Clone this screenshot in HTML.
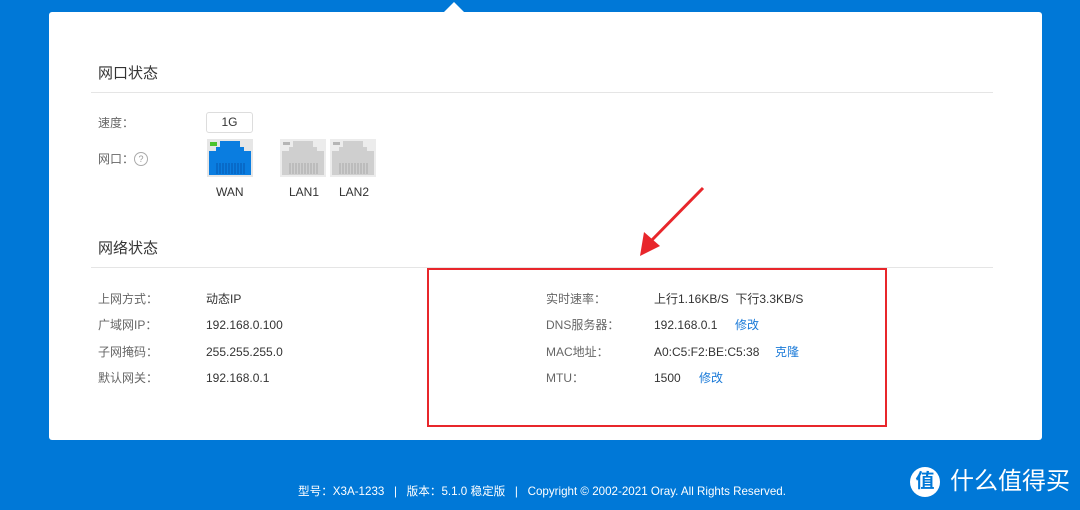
<!DOCTYPE html>
<html><head><meta charset="utf-8"><style>
body{margin:0;width:1080px;height:510px;background:#0078d7;position:relative;overflow:hidden;font-family:"Liberation Sans","Noto Sans CJK SC",sans-serif;}
.card{position:absolute;left:49px;top:12px;width:993px;height:428px;background:#fff;border-radius:3px;}
.t{position:absolute;font-size:12px;line-height:14px;color:#333;white-space:nowrap;}
.l{color:#666;}
.h{position:absolute;font-size:15px;line-height:18px;color:#333;}
.hr{position:absolute;height:1px;background:#e5e5e5;}
.a{color:#1a7ad8;}
.f{position:absolute;top:485px;font-size:11.6px;line-height:14px;color:#fff;white-space:nowrap;}
</style></head><body>
<svg style="position:absolute;left:443px;top:2px" width="22" height="11"><polygon points="0,11 11,0 22,11" fill="#fff"/></svg>
<div class="card"></div>
<div class="h" style="left:98px;top:65px">网口状态</div>
<div class="hr" style="left:91px;top:92px;width:902px"></div>
<div class="t l" style="left:98px;top:116px">速度：</div>
<div style="position:absolute;left:206px;top:112px;width:45px;height:19px;border:1px solid #ddd;border-radius:3px;font-size:12px;text-align:center;line-height:19px;color:#333">1G</div>
<div class="t l" style="left:98px;top:152px">网口：</div>
<div style="position:absolute;left:134px;top:152px;width:12px;height:12px;border:1px solid #aaa;border-radius:50%;font-size:9px;line-height:12px;text-align:center;color:#999">?</div>
<svg style="position:absolute;left:207px;top:139px" width="46" height="38"><rect width="46" height="38" fill="#e6e6e6"/><path d="M13 2H33V8H37V12H44V36H2V12H9V8H13Z" fill="#0a7de0"/><rect x="3" y="3" width="7" height="4" fill="#4cc32c"/><g stroke="#0656b0" stroke-width="1"><path d="M10 24V35M13 24V35M16 24V35M19 24V35M22 24V35M25 24V35M28 24V35M31 24V35M34 24V35M37 24V35"/></g></svg>
<svg style="position:absolute;left:280px;top:139px" width="46" height="38"><rect width="46" height="38" fill="#ececec"/><path d="M13 2H33V8H37V12H44V36H2V12H9V8H13Z" fill="#cfcfcf"/><rect x="3" y="3" width="7" height="3" fill="#b5b5b5"/><g stroke="#aaa"><path d="M10 24V35M13 24V35M16 24V35M19 24V35M22 24V35M25 24V35M28 24V35M31 24V35M34 24V35M37 24V35"/></g></svg>
<svg style="position:absolute;left:330px;top:139px" width="46" height="38"><rect width="46" height="38" fill="#ececec"/><path d="M13 2H33V8H37V12H44V36H2V12H9V8H13Z" fill="#cfcfcf"/><rect x="3" y="3" width="7" height="3" fill="#b5b5b5"/><g stroke="#aaa"><path d="M10 24V35M13 24V35M16 24V35M19 24V35M22 24V35M25 24V35M28 24V35M31 24V35M34 24V35M37 24V35"/></g></svg>
<div class="t" style="left:216px;top:185px">WAN</div>
<div class="t" style="left:289px;top:185px">LAN1</div>
<div class="t" style="left:339px;top:185px">LAN2</div>
<div class="h" style="left:98px;top:240px">网络状态</div>
<div class="hr" style="left:91px;top:267px;width:902px"></div>
<div class="t l" style="left:98px;top:292px">上网方式：</div><div class="t" style="left:206px;top:292px">动态IP</div>
<div class="t l" style="left:98px;top:318px">广域网IP：</div><div class="t" style="left:206px;top:318px">192.168.0.100</div>
<div class="t l" style="left:98px;top:345px">子网掩码：</div><div class="t" style="left:206px;top:345px">255.255.255.0</div>
<div class="t l" style="left:98px;top:371px">默认网关：</div><div class="t" style="left:206px;top:371px">192.168.0.1</div>
<div class="t l" style="left:546px;top:292px">实时速率：</div><div class="t" style="left:654px;top:292px">上行1.16KB/S&nbsp; 下行3.3KB/S</div>
<div class="t l" style="left:546px;top:318px">DNS服务器：</div><div class="t" style="left:654px;top:318px">192.168.0.1</div><div class="t a" style="left:735px;top:318px">修改</div>
<div class="t l" style="left:546px;top:345px">MAC地址：</div><div class="t" style="left:654px;top:345px">A0:C5:F2:BE:C5:38</div><div class="t a" style="left:775px;top:345px">克隆</div>
<div class="t l" style="left:546px;top:371px">MTU：</div><div class="t" style="left:654px;top:371px">1500</div><div class="t a" style="left:699px;top:371px">修改</div>
<div style="position:absolute;left:427px;top:268px;width:456px;height:155px;border:2px solid #e8262b"></div>
<svg style="position:absolute;left:630px;top:180px" width="80" height="85"><line x1="73" y1="8" x2="20" y2="62" stroke="#e8262b" stroke-width="3"/><polygon points="10,76 14,52 30,66" fill="#e8262b"/></svg>
<div class="f" style="left:298px">型号：X3A-1233 &nbsp;&nbsp;| &nbsp;&nbsp;版本：5.1.0 稳定版 &nbsp;&nbsp;| &nbsp;&nbsp;Copyright © 2002-2021 Oray. All Rights Reserved.</div>
<div style="position:absolute;left:910px;top:467px;width:30px;height:30px;border-radius:50%;background:#fff;color:#0078d7;font-size:19px;line-height:30px;text-align:center;font-weight:bold">值</div>
<div style="position:absolute;left:950px;top:466px;font-size:24px;line-height:32px;color:#fff;white-space:nowrap">什么值得买</div>
</body></html>
